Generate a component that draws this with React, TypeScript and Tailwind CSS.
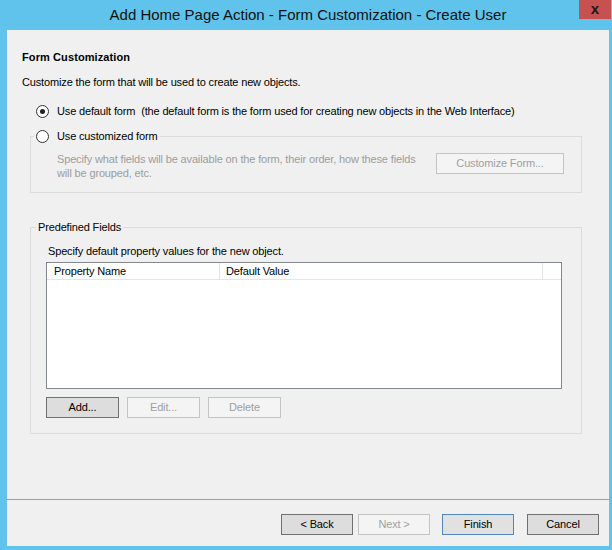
import React from "react";

const font = "font-['Liberation_Sans',Arial,sans-serif]";

function Radio({ checked }: { checked?: boolean }) {
  return (
    <span className="w-[13px] h-[13px] rounded-full border border-[#333333] bg-white flex items-center justify-center shrink-0">
      {checked && <span className="w-[5px] h-[5px] rounded-full bg-[#222222]" />}
    </span>
  );
}

function Btn({
  label,
  disabled,
  isDefault,
  w = "w-[72px]",
}: {
  label: string;
  disabled?: boolean;
  isDefault?: boolean;
  w?: string;
}) {
  const base = `${w} h-[21px] border text-[11px] tracking-[-0.15px] flex items-center justify-center shrink-0`;
  const look = disabled
    ? "border-[#c4c4c4] bg-[#f4f4f4] text-[#a0a0a0]"
    : isDefault
    ? "border-[#4f86bf] bg-[#e1e1e1] text-black"
    : "border-[#707070] bg-[#dddddd] text-black";
  return <div className={`${base} ${look}`}>{label}</div>;
}

export default function App() {
  return (
    <div className={`${font} w-[612px] h-[550px] bg-[#5fc3eb] flex flex-col overflow-hidden`}>
      {/* Title bar */}
      <div className="relative h-[30px] shrink-0 flex items-center justify-center pb-[2px] pl-[4px]">
        <span className="text-[15px] text-[#111111] leading-none">
          Add Home Page Action - Form Customization - Create User
        </span>
        <div className="absolute top-0 right-[1px] w-[32px] h-[19px] bg-[#c75050] flex items-center justify-center">
          <span className="text-[15px] font-bold text-[#1a1a1a] leading-none -mt-[3px]">x</span>
        </div>
      </div>

      {/* Client area */}
      <div className="flex-1 ml-[7px] mr-[3px] mb-[4px] bg-[#f0f0f0] flex flex-col text-[11px] tracking-[-0.15px] text-black">
        <div className="pl-[15px] pt-[20px] flex flex-col">
          <div className="h-[14px] leading-[14px] font-bold tracking-[0.1px]">Form Customization</div>
          <div className="mt-[11px] h-[14px] leading-[14px]">
            Customize the form that will be used to create new objects.
          </div>
        </div>

        <div className="ml-[29px] mt-[15px] h-[14px] flex items-center">
          <Radio checked />
          <span className="ml-[8px] leading-[14px] whitespace-nowrap">
            Use default form&nbsp;&nbsp;
            <span>
              (the default form is the form used for creating new objects in the Web Interface)
            </span>
          </span>
        </div>

        {/* Group box 1 */}
        <fieldset className="ml-[23px] mt-[11px] w-[552px] border border-[#dcdcdc]">
          <legend className="ml-[3px] px-[2px] h-[14px] flex items-center">
            <Radio />
            <span className="ml-[8px] leading-[14px] whitespace-nowrap">Use customized form</span>
          </legend>
          <div className="pl-[26px] pr-[17px] pb-[12px] flex w-full justify-between items-start">
            <div className="mt-[9px] leading-[14px] text-[#9d9d9d] whitespace-nowrap">
              Specify what fields will be available on the form, their order, how these fields
              <br />
              will be grouped, etc.
            </div>
            <div className="mt-[10px]">
              <Btn label="Customize Form..." disabled w="w-[128px]" />
            </div>
          </div>
        </fieldset>

        {/* Group box 2 */}
        <fieldset className="ml-[23px] mt-[27px] w-[552px] border border-[#dcdcdc]">
          <legend className="ml-[5px] px-[2px] h-[14px] leading-[14px]">Predefined Fields</legend>
          <div className="pl-[15px] pr-[19px] pb-[15px] flex flex-col">
            <div className="ml-[2px] mt-[10px] h-[14px] leading-[14px]">
              Specify default property values for the new object.
            </div>
            <div className="mt-[4px] w-[516px] h-[127px] border border-[#828790] bg-white flex flex-col">
              <div className="h-[17px] border-b border-[#e5e5e5] flex">
                <div className="w-[173px] border-r border-[#e5e5e5] pl-[7px] leading-[16px]">Property Name</div>
                <div className="w-[323px] border-r border-[#e5e5e5] pl-[6px] leading-[16px]">Default Value</div>
                <div className="flex-1" />
              </div>
            </div>
            <div className="mt-[8px] flex gap-[8px]">
              <Btn label="Add..." w="w-[73px]" />
              <Btn label="Edit..." disabled w="w-[73px]" />
              <Btn label="Delete" disabled w="w-[73px]" />
            </div>
          </div>
        </fieldset>

        <div className="flex-1" />

        <div className="h-[1px] bg-[#a0a0a0] shrink-0" />
        <div className="mt-[14px] mb-[11px] pr-[10px] flex justify-end">
          <Btn label="< Back" />
          <div className="ml-[5px]">
            <Btn label="Next >" disabled />
          </div>
          <div className="ml-[12px]">
            <Btn label="Finish" isDefault />
          </div>
          <div className="ml-[13px]">
            <Btn label="Cancel" />
          </div>
        </div>
      </div>
    </div>
  );
}
